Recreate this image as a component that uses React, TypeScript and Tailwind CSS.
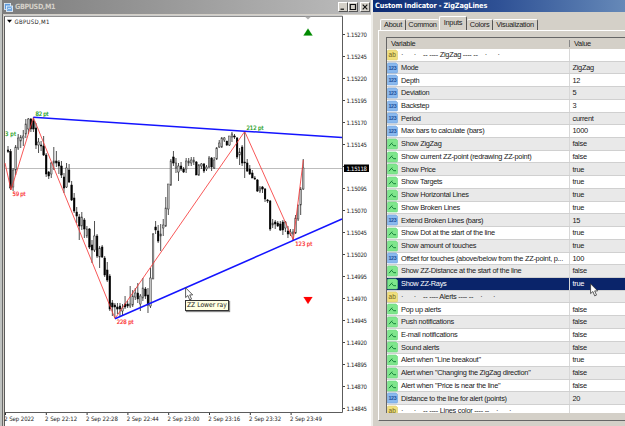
import { clsx } from "clsx";

type Kind = "text" | "number" | "bool";

// [high, body top, body bottom, low, bearish]
const candles = [
    [146, 150, 151.5, 153, 1], [149, 151.5, 188, 190, 1], [168, 170, 187, 191, 0], [145, 147, 170, 175, 0],
    [134, 138, 148, 150, 0], [135, 137, 141, 148, 0], [130, 136, 138, 146, 0], [119, 124, 134, 138, 0],
    [118, 119, 129, 134, 0], [118, 119, 129, 132, 1], [117, 121, 129, 132, 1], [123, 128, 145, 149, 1],
    [138, 142, 145, 153, 0], [141, 145, 146, 151, 1], [136, 146, 155, 156, 1], [153, 155, 174, 177, 1],
    [171, 172, 176, 179, 1], [162, 163, 174, 178, 0], [147, 161, 163, 170, 0], [151, 161, 163, 167, 1],
    [160, 162, 166, 174, 1], [161, 166, 175, 178, 1], [173, 177, 188, 193, 1], [163, 168, 187, 188, 0],
    [164, 170, 182, 183, 1], [181, 185, 200, 201, 1], [193, 198, 211, 213, 1], [207, 212, 216, 223, 1],
    [214, 217, 226, 240, 1], [212, 217, 226, 230, 0], [218, 220, 229, 238, 1], [226, 229, 236, 238, 0],
    [228, 229, 247, 249, 1], [240, 245, 250, 263, 1], [221, 236, 250, 252, 0], [234, 236, 256, 258, 1],
    [246, 248, 257, 268, 0], [245, 247, 257, 258, 1], [256, 258, 275, 277, 1], [262, 270, 280, 282, 1],
    [274, 276, 309, 311, 1], [300, 303, 307, 316, 1], [303, 305, 307, 318, 1], [303, 307, 309, 314, 1],
    [303, 306, 309, 316, 1], [304, 308, 311, 315, 0], [296, 304, 307, 309, 1], [301, 304, 306, 308, 1],
    [286, 304, 306, 308, 0], [290, 296, 305, 307, 0], [288, 293, 297, 300, 0], [283, 293, 299, 303, 1],
    [294, 296, 304, 311, 0], [278, 288, 298, 301, 0], [287, 289, 296, 299, 1], [288, 295, 305, 313, 1],
    [268, 278, 306, 308, 0], [233, 234, 279, 279, 0], [221, 227, 230, 234, 1], [225, 231, 241, 243, 1],
    [224, 234, 236, 251, 0], [219, 225, 228, 236, 0], [197, 208, 226, 227, 0], [184, 184, 209, 215, 0],
    [159, 161, 185, 186, 0], [151, 157, 163, 166, 1], [158, 163, 168, 173, 0], [163, 166, 172, 181, 0],
    [162, 166, 169, 171, 1], [167, 169, 172, 173, 1], [158, 161, 169, 173, 0], [158, 161, 163, 166, 0],
    [157, 160, 163, 166, 0], [157, 160, 162, 165, 0], [161, 162, 175, 175, 1], [164, 165, 175, 176, 0],
    [163, 164, 166, 169, 0], [163, 164, 171, 173, 1], [165, 167, 169, 171, 0], [156, 158, 167, 168, 0],
    [157, 158, 167, 171, 1], [157, 160, 168, 169, 0], [147, 148, 159, 160, 0], [140, 143, 147, 148, 0],
    [137, 138, 147, 148, 0], [137, 138, 140, 142, 0], [141, 141, 145, 146, 1], [136, 136, 145, 146, 0],
    [132, 134, 137, 142, 0], [134, 136, 137, 139, 1], [137, 138, 157, 159, 1], [148, 152, 155, 165, 0],
    [145, 147, 163, 166, 1], [131, 162, 163, 178, 1], [159, 163, 171, 172, 1], [165, 169, 174, 175, 1],
    [170, 173, 178, 178, 1], [176, 178, 179, 180, 1], [179, 180, 191, 192, 1], [186, 188, 191, 193, 0],
    [186, 187, 189, 193, 1], [188, 189, 199, 202, 1], [199, 200, 201, 203, 1], [200, 201, 229, 231, 1],
    [219, 223, 225, 228, 0], [220, 222, 224, 229, 1], [221, 223, 226, 227, 1], [221, 224, 230, 231, 1],
    [220, 222, 230, 235, 1], [221, 222, 228, 232, 0], [226, 231, 234, 238, 1], [229, 232, 234, 236, 0],
    [229, 232, 234, 240, 0], [215, 218, 233, 234, 0], [205, 205, 219, 221, 0], [187, 189, 205, 215, 0],
    [159, 168, 189, 190, 0],
];

// the empty slot is covered by the current price tag
const prices = [
    "1.15270", "1.15245", "1.15220", "1.15195", "1.15170", "1.15145", "", "1.15095", "1.15070",
    "1.15045", "1.15020", "1.14995", "1.14970", "1.14945", "1.14920", "1.14895", "1.14870", "1.14845",
];

const times = [
    "2 Sep 2022", "2 Sep 22:12", "2 Sep 22:28", "2 Sep 22:44", "2 Sep 23:00", "2 Sep 23:16", "2 Sep 23:32", "2 Sep 23:49",
];

const rows: [Kind, string, string][] = [
    ["text", "·      ·    -- ---- ZigZag ---- --    ·      ·", ""],
    ["number", "Mode", "ZigZag"],
    ["number", "Depth", "12"],
    ["number", "Deviation", "5"],
    ["number", "Backstep", "3"],
    ["number", "Period", "current"],
    ["number", "Max bars to calculate (bars)", "1000"],
    ["bool", "Show ZigZag", "false"],
    ["bool", "Show current ZZ-point (redrawing ZZ-point)", "false"],
    ["bool", "Show Price", "true"],
    ["bool", "Show Targets", "true"],
    ["bool", "Show Horizontal Lines", "true"],
    ["bool", "Show Broken Lines", "true"],
    ["number", "Extend Broken Lines (bars)", "15"],
    ["bool", "Show Dot at the start of the line", "true"],
    ["bool", "Show amount of touches", "true"],
    ["number", "Offset for touches (above/below from the ZZ-point, p...", "100"],
    ["bool", "Show ZZ-Distance at the start of the line", "false"],
    ["bool", "Show ZZ-Rays", "true"],
    ["text", "·      ·    -- ---- Alerts ---- --    ·      ·", ""],
    ["bool", "Pop up alerts", "false"],
    ["bool", "Push notifications", "false"],
    ["bool", "E-mail notifications", "false"],
    ["bool", "Sound alerts", "false"],
    ["bool", "Alert when \"Line breakout\"", "true"],
    ["bool", "Alert when \"Changing the ZigZag direction\"", "false"],
    ["bool", "Alert when \"Price is near the line\"", "false"],
    ["number", "Distance to the line for alert (points)", "20"],
    ["text", "·      ·    -- ---- Lines color ---- --    ·      ·", ""],
];

const SELECTED = 18;

const Cursor = ({ className }: { className: string }) => (
    <svg className={className} width="9" height="14" viewBox="0 0 9 14">
        <path d="M.6 .8V10.6L2.9 8.5L4.7 12.9L6.5 12.1L4.7 7.9H7.7Z" fill="#fff" stroke="#333" strokeWidth=".8" />
    </svg>
);

const RowIcon = ({ kind }: { kind: Kind }) => (
    <svg className="shrink-0" width="11" height="12" viewBox="0 0 11 12">
        <path
            d="M.5 2Q.5 1 1.5 1H9L10.5 2.5V10Q10.5 11 9.5 11H.5Z"
            fill={kind === "text" ? "#f0df7c" : kind === "number" ? "#8ab9ee" : "#7fe68c"}
            stroke={kind === "text" ? "#dcca70" : kind === "number" ? "#6ea2dd" : "#69d67c"}
            strokeWidth=".6"
        />
        {kind === "bool" && <path d="M2 8.2L5.2 4.6M4.6 5.4L6.6 7.7H9" fill="none" stroke="#15833a" strokeWidth="1" />}
        {kind === "text" && <text x="1.5" y="8.3" fontSize="6.5" textLength="7" fill="#6f611c">ab</text>}
        {kind === "number" && <text x="1.4" y="8" fontSize="5.3" fontWeight="700" textLength="8" fill="#1d4f9b">123</text>}
    </svg>
);

const Chart = () => (
    <svg width="369" height="412" viewBox="2 14 369 412" fontFamily="'DejaVu Sans Condensed', 'DejaVu Sans', sans-serif" fontSize="6">
        <rect x="2" y="14" width="369" height="412" fill="#fff" />
        <rect x="2" y="14" width="369" height="1" fill="#d4d0c8" />
        <rect x="2" y="14" width="1" height="412" fill="#6a6a6a" />
        <rect x="3" y="15" width="1" height="411" fill="#d4d0c8" />
        <path d="M4.5 426V16.2H342.5V412.5H4.5" fill="none" stroke="#5c5c5c" strokeWidth="1" />
        <path d="M7 19.8H12L9.5 22.8Z" fill="#000" />
        <text x="14.5" y="23.7" textLength="35" fill="#222">GBPUSD,M1</text>

        <path d="M5 168.5H342" stroke="#bdbdbd" />
        {candles.map(([high, top, bottom, low, bearish], i) => {
            const x = 8 + i * 2.545;
            return (
                <g key={i}>
                    <path d={`M${x} ${high}V${low}`} stroke="#222" strokeWidth=".8" />
                    <rect
                        x={x - 0.8}
                        y={top}
                        width="1.6"
                        height={Math.max(bottom - top, 0.8)}
                        fill={bearish ? "#000" : "#c4c4c4"}
                        stroke={bearish ? "#000" : "#333"}
                        strokeWidth=".5"
                    />
                </g>
            );
        })}
        <path d="M5 163L11 190L33.4 117.5L115 318.5L244.7 131.5L293.3 240L303.3 160" fill="none" stroke="#f73a3a" strokeWidth=".85" />
        <path d="M33.4 117.3L342 137.6M115 318.8L342 219" stroke="#1414ff" strokeWidth="1.5" />

        <g fill="#0a960a" stroke="#0a960a" strokeWidth=".15">
            <text x="35.5" y="115.5" textLength="13">82 pt</text>
            <text x="5" y="135.7" textLength="11">3 pt</text>
            <text x="246.5" y="129.7" textLength="17">212 pt</text>
            <path d="M303.5 35.5H312.5L308 28.5Z" fill="#008a00" />
        </g>
        <g fill="#fb2222" stroke="#fb2222" strokeWidth=".15">
            <text x="12.5" y="195.8" textLength="13">59 pt</text>
            <text x="116.7" y="324.2" textLength="17">228 pt</text>
            <text x="295.3" y="246" textLength="17">123 pt</text>
            <path d="M303.5 297H312.5L308 304Z" fill="#f00" />
        </g>
        <path d="M305 16.7H311L308 19.5Z" fill="#b0b0b0" />

        <g fill="#1a1a1a">
            {prices.map((price, i) => (
                <g key={i}>
                    <path d={`M343 ${34.5 + i * 22}h2`} stroke="#444" />
                    {price && <text x="346.5" y={36.7 + i * 22} textLength="20.5">{price}</text>}
                </g>
            ))}
            {times.map((time, i) => (
                <g key={time}>
                    <path d={`M${5.5 + i * 40.8} 413v2`} stroke="#333" />
                    <text x={4.3 + i * 40.8} y="421.2" textLength={i ? 32 : 30}>{time}</text>
                </g>
            ))}
        </g>
        <rect x="344" y="164.5" width="25" height="7.5" fill="#000" />
        <text x="346.5" y="170.6" textLength="20.5" fill="#fff">1.15118</text>
    </svg>
);

const WindowButton = ({ d }: { d: string }) => (
    <div className="h-[10px] w-[10px] border border-t-white border-l-white border-r-[#555] border-b-[#555] bg-[#d4d0c8]">
        <svg width="8" height="8" viewBox="0 0 8 8">
            <path d={d} fill="none" stroke="#111" strokeWidth="1.2" />
        </svg>
    </div>
);

const ChartWindow = () => (
    <section className="flex w-[371px] flex-col border-l-2 border-l-[#bfc2c0] bg-[#666]">
        <header className="flex h-[14px] shrink-0 items-center bg-linear-to-r from-[#7d7d7d] to-[#bdbdbd] pl-[2px] pr-px">
            <svg width="9" height="9" viewBox="0 0 9 9">
                <rect x=".4" y=".5" width="6.2" height="6" fill="#5f9bdc" stroke="#e4f1fd" strokeWidth=".8" />
                <rect x="2.4" y="3" width="6.2" height="5.5" fill="#72aae4" stroke="#eef7ff" strokeWidth=".8" />
                <path d="M3.5 6.5L5 5L6 6L7.5 4.5" fill="none" stroke="#fff" strokeWidth=".6" />
            </svg>
            <span className="ml-[2px] grow font-['DejaVu_Sans_Condensed'] text-[7.2px] font-bold leading-none tracking-[-0.4px] text-[#d4d0c8]">GBPUSD,M1</span>
            <WindowButton d="M1.5 6.2H5" />
            <WindowButton d="M1.3 1.5H6.5V6.5H1.3Z" />
            <div className="ml-[2px]">
                <WindowButton d="M1.7 1.7L6.3 6.3M6.3 1.7L1.7 6.3" />
            </div>
        </header>
        <Chart />
    </section>
);

const Dialog = () => (
    <section className="flex w-[252px] flex-col bg-[#d4d0c8]">
        <header className="flex h-[12px] shrink-0 items-center bg-linear-to-r from-[#0c2a72] via-[#2f5195] to-[#6689b8] pl-[2px] font-['DejaVu_Sans_Condensed'] text-[7.3px] font-bold leading-none tracking-[-0.12px] whitespace-nowrap text-white">
            Custom Indicator - ZigZagLines
        </header>
        <nav className="flex h-[18px] shrink-0 items-end pl-[7px] text-[7.4px] leading-none tracking-[-0.28px]">
            <div className="flex h-[11px] w-[26px] items-center justify-center rounded-t-xs border-t border-r border-l border-t-white border-r-[#555] border-l-white">About</div>
            <div className="flex h-[11px] w-[33px] items-center justify-center rounded-t-xs border-t border-t-white">Common</div>
            <div className="flex h-[14px] w-[28px] items-center justify-center rounded-t-xs border-t border-r border-l border-t-white border-r-[#555] border-l-white pb-[2px]">Inputs</div>
            <div className="flex h-[11px] w-[26px] items-center justify-center rounded-t-xs border-t border-r border-t-white border-r-[#555]">Colors</div>
            <div className="flex h-[11px] w-[45px] items-center justify-center rounded-t-xs border-t border-r border-t-white border-r-[#555]">Visualization</div>
        </nav>
        <div className="ml-[5px] h-[391px] border-t border-b border-l border-t-white border-b-[#666] border-l-white pt-[6px] pl-[7px]">
            <div className="flex h-[376px] flex-col overflow-hidden border-t border-l border-[#666] bg-white text-[7.4px] tracking-[-0.28px]">
                <div className="flex h-[11px] shrink-0 items-center bg-[#d4d0c8] leading-none">
                    <span className="w-[182px] pl-[4px]">Variable</span>
                    <span className="border-l border-[#888] pl-[4px]">Value</span>
                </div>
                {rows.map(([kind, name, value], i) => (
                    <div
                        key={name}
                        className={clsx(
                            "flex h-[12.73px] shrink-0 items-center border-b border-[#d0d0d0] leading-none whitespace-pre",
                            i === SELECTED ? "bg-[#0a246a] text-white" : i % 2 ? "bg-[#e9e9e9]" : "bg-white",
                        )}
                    >
                        <div className="flex h-full w-[183px] shrink-0 items-center border-r border-[#d8d8d8]">
                            <RowIcon kind={kind} />
                            <span className="ml-[3px]">{name}</span>
                        </div>
                        <span className="pl-[2.5px]">{value}</span>
                    </div>
                ))}
            </div>
        </div>
    </section>
);

export default function App() {
    return (
        <main className="relative flex h-[426px] w-[625px] overflow-hidden bg-[#d4d0c8] font-['Liberation_Sans',sans-serif] text-[#202020]">
            <ChartWindow />
            <div className="w-[2px] bg-[#efeeea]" />
            <Dialog />
            <div className="absolute top-[300px] left-[185px] flex h-[11px] w-[44px] items-center border border-[#333] bg-[#ffffe1] pl-px font-['DejaVu_Sans_Condensed'] text-[6.7px] leading-none whitespace-nowrap shadow-[1px_1px_1px_#888]">
                ZZ Lower ray
            </div>
            <Cursor className="absolute top-[287px] left-[185px]" />
            <Cursor className="absolute top-[283px] left-[590px]" />
        </main>
    );
}
